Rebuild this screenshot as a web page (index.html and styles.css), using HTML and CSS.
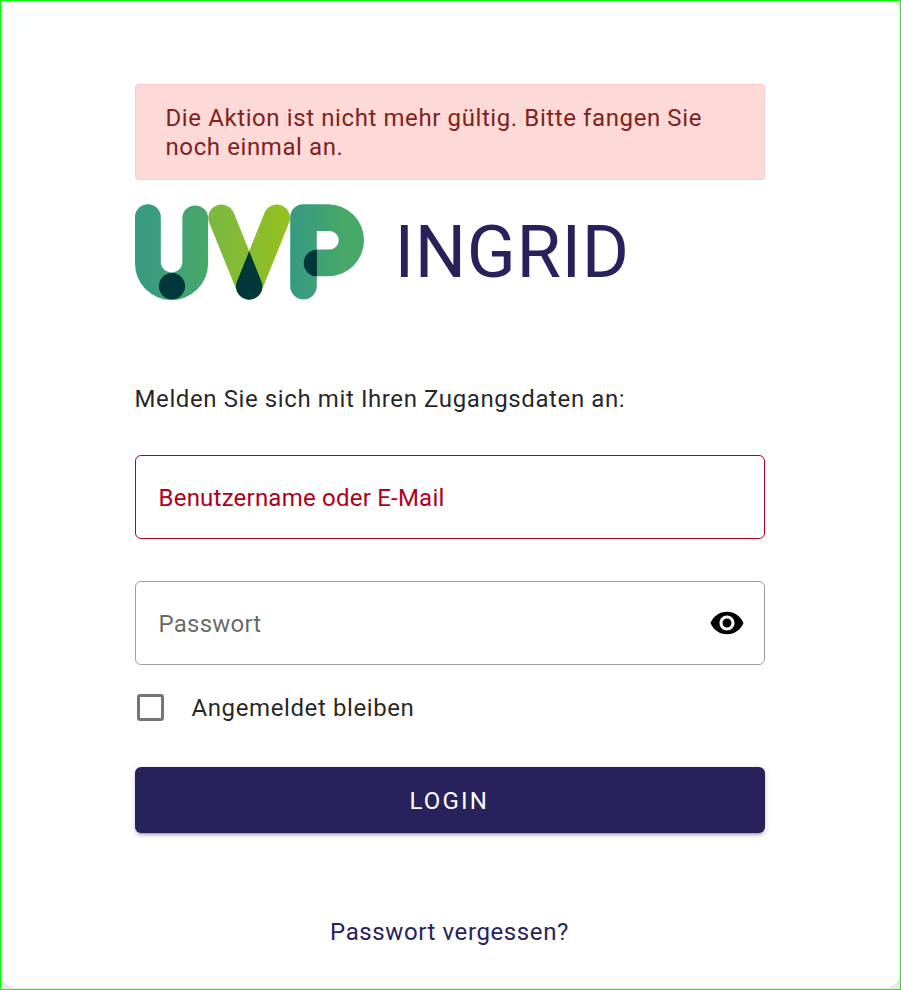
FILE: index.html
```html
<!DOCTYPE html>
<html lang="de">
<head>
<meta charset="utf-8">
<title>Login</title>
<link rel="stylesheet" href="styles.css">
</head>
<body>
<main class="frame">
<section class="card">
  <div class="alert">Die Aktion ist nicht mehr gültig. Bitte fangen Sie noch einmal an.</div>
  <header class="brand">
    <svg class="logo" width="230" height="96" viewBox="0 0 230 96" role="img" aria-label="UVP">
      <defs>
        <linearGradient id="u" gradientUnits="userSpaceOnUse" x1="0" y1="0" x2="73" y2="0"><stop offset=".15" stop-color="#389b80"/><stop offset="1" stop-color="#47a867"/></linearGradient>
        <linearGradient id="v" gradientUnits="userSpaceOnUse" x1="73" y1="0" x2="155" y2="0"><stop offset="0" stop-color="#79b841"/><stop offset="1" stop-color="#95c11f"/></linearGradient>
        <linearGradient id="p" gradientUnits="userSpaceOnUse" x1="155" y1="0" x2="229" y2="0"><stop offset=".1" stop-color="#389b80"/><stop offset=".75" stop-color="#47a867"/></linearGradient>
      </defs>
      <path fill="url(#u)" d="M0 13.2a12.9 12.9 0 0 1 25.8 0V57.700a10.800 10.800 0 0 0 21.600 0V13.200a12.900 12.900 0 0 1 25.700 0V59.500a36.550 36.550 0 0 1-73.100 0z"/>
      <circle cx="37" cy="82.200" r="13.100" fill="#00373a"/>
      <path fill="none" stroke="url(#v)" stroke-width="26.400" stroke-linecap="round" stroke-linejoin="round" d="M86.500 13.800L114.200 82.300L141.800 13.800"/>
      <path fill="#00373a" d="M114.200 47L126.400 77.400A13.200 13.200 0 1 1 102 77.400z"/>
      <path fill="url(#p)" fill-rule="evenodd" d="M155.200 13.200A13 13 0 0 1 168.200.2H193a36.050 36.050 0 0 1 0 72.100H181.800V82a13.300 13.300 0 0 1-26.600 0zM181.800 27V45.500H194.500a9.250 9.250 0 0 0 0-18.500z"/>
      <path fill="#00373a" d="M182 45.700V72.300a13.300 13.300 0 0 1 0-26.600z"/>
    </svg>
    <h1 class="title">INGRID</h1>
  </header>
  <form class="form">
    <p class="intro">Melden Sie sich mit Ihren Zugangsdaten an:</p>
    <div class="field field-error"><label>Benutzername oder E-Mail</label></div>
    <div class="field"><label>Passwort</label>
      <svg class="eye" width="36" height="36" viewBox="0 0 24 24"><path d="M12 4.500C7 4.500 2.730 7.610 1 12c1.730 4.390 6 7.500 11 7.500s9.270-3.110 11-7.500c-1.730-4.390-6-7.500-11-7.500zM12 17c-2.760 0-5-2.240-5-5s2.240-5 5-5 5 2.240 5 5-2.240 5-5 5zm0-8c-1.660 0-3 1.340-3 3s1.340 3 3 3 3-1.340 3-3-1.340-3-3-3z"/></svg>
    </div>
    <div class="remember"><span class="box"></span><span>Angemeldet bleiben</span></div>
    <button class="login" type="button">LOGIN</button>
    <a class="forgot">Passwort vergessen?</a>
  </form>
</section>
</main>
</body>
</html>
```
FILE: styles.css
```css
* { box-sizing: border-box; }
body {
  margin: 0;
  font: 24px/30px Roboto, sans-serif;
  letter-spacing: .6px;
  color: rgba(0, 0, 0, .87);
}
.frame {
  height: 990px;
  border: 1px solid #0f0;
  background: #e8e8e8;
}
.card {
  height: 987px;
  padding: 83px 135px 0 134px;
  border-radius: 9px 12px 15px 15px;
  background: #fff;
}
.alert {
  height: 96px;
  padding: 19px 29.5px;
  border: 1px solid #fccac7;
  border-radius: 3px;
  background: #fdd9d7;
  color: #7f231c;
  line-height: 29px;
}
.brand {
  display: flex;
  margin-top: 24px;
  height: 96px;
  align-items: center;
}
.logo { flex: none; }
.title {
  margin: 2px 0 0 29.5px;
  font-size: 72px;
  font-weight: 400;
  line-height: 96px;
  letter-spacing: .675px;
  color: #28225c;
}
.form {
  display: flex;
  flex-direction: column;
}
.intro { margin: 84px 0 41px -.5px; }
.field {
  display: flex;
  align-items: center;
  justify-content: space-between;
  height: 84px;
  margin-bottom: 42px;
  padding: 0 19px 0 22.500px;
  border: 1px solid #9e9e9e;
  border-radius: 6px;
  color: rgba(0, 0, 0, .6);
  letter-spacing: .225px;
}
.field label { padding-top: 2px; }
.field-error {
  border-color: #b00020;
  color: #b00020;
}
.eye {
  margin-right: -.25px;
  fill: #000;
}
.remember {
  display: flex;
  align-items: center;
  gap: 27.500px;
  height: 30px;
  margin: -14px 0 0 2px;
}
.box {
  width: 27px;
  height: 27px;
  margin-bottom: 1px;
  border: 3px solid #757575;
  border-radius: 3px;
}
.login {
  height: 66px;
  margin-top: 44px;
  padding: 2px 1.500px 0 0;
  border: 0;
  border-radius: 6px;
  background: #28225c;
  color: #fff;
  font: 24px/64px Roboto, sans-serif;
  letter-spacing: 2.143px;
  box-shadow: 0 4px 1px -3px rgba(0, 0, 0, .2), 0 3px 3px rgba(0, 0, 0, .14), 0 1px 7px rgba(0, 0, 0, .12);
}
.forgot {
  margin: 84px 1px 0 0;
  align-self: center;
  color: #28225c;
}
```
